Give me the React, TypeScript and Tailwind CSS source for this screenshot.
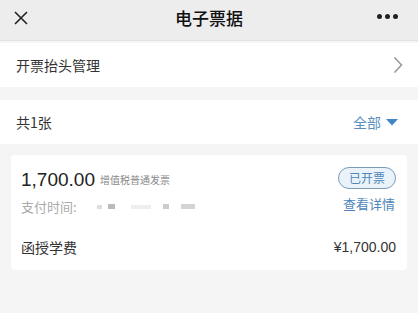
export default function App() {
  return (
    <div className="w-[418px] h-[313px] overflow-hidden bg-[#f5f5f5] font-['Noto_Sans_CJK_SC','Noto_Sans',sans-serif] text-[#333]">
      {/* Nav bar */}
      <div className="relative h-[41px] bg-[#ededed] border-b border-[#e2e2e2] flex items-center justify-center">
        <svg className="absolute left-[13px] top-[10px]" width="16" height="16" viewBox="0 0 16 16">
          <path d="M2 2L14 14M14 2L2 14" stroke="#222" strokeWidth="1.6" fill="none" />
        </svg>
        <span className="text-[17px] font-medium text-[#111] leading-none -mt-[6px]">电子票据</span>
        <div className="absolute right-[20px] top-[14px] flex gap-[3px]">
          <span className="w-[5px] h-[5px] rounded-full bg-[#222]"></span>
          <span className="w-[5px] h-[5px] rounded-full bg-[#222]"></span>
          <span className="w-[5px] h-[5px] rounded-full bg-[#222]"></span>
        </div>
      </div>

      {/* Title management */}
      <div className="mt-[2px] h-[44px] bg-white flex items-center justify-between pl-[16px] pr-[15px]">
        <span className="text-[14px] text-[#333]">开票抬头管理</span>
        <svg width="10" height="18" viewBox="0 0 10 18">
          <path d="M1.5 1.5L8.5 9L1.5 16.5" stroke="#9a9a9a" strokeWidth="1.6" fill="none" />
        </svg>
      </div>

      {/* Count row */}
      <div className="mt-[13px] h-[44px] bg-white flex items-center justify-between pl-[16px] pr-[20px]">
        <span className="text-[14px] text-[#333]">共1张</span>
        <div className="flex items-center gap-[5px]">
          <span className="text-[14px] text-[#5a8fbd]">全部</span>
          <svg width="12" height="7" viewBox="0 0 12 7">
            <path d="M0 0H12L6 6.5Z" fill="#3f86c6" />
          </svg>
        </div>
      </div>

      {/* Invoice card */}
      <div className="mt-[11px] mx-[11px] bg-white rounded-[4px] pl-[10px] pr-[11px] pt-[12px] pb-[12px]">
        <div className="flex justify-between">
          <div className="flex flex-col">
            <div className="flex items-end gap-[5px]">
              <span className="text-[19px] leading-[26px] text-[#222] font-['Liberation_Sans',sans-serif]">1,700.00</span>
              <span className="text-[10px] text-[#888] mb-[6px]">增值税普通发票</span>
            </div>
            <div className="mt-[4px] flex items-center">
              <span className="text-[13px] text-[#aaa]">支付时间:</span>
              <div className="ml-[20px] flex items-center gap-[6px]">
                <span className="w-[5px] h-[4px] bg-[#ddd]"></span>
                <span className="w-[7px] h-[5px] bg-[#bbb]"></span>
                <span className="ml-[10px] w-[20px] h-[4px] bg-[#eee]"></span>
                <span className="ml-[6px] w-[6px] h-[5px] bg-[#ccc]"></span>
                <span className="ml-[6px] w-[14px] h-[5px] bg-[#d4d4d4]"></span>
              </div>
            </div>
          </div>
          <div className="flex flex-col items-end">
            <span className="h-[22px] px-[10px] rounded-full border border-[#7a9cb8] bg-[#eaf3fa] text-[12px] leading-[20px] text-[#4f87b8]">已开票</span>
            <span className="mt-[5px] text-[13px] text-[#4f87b8] mr-[1px]">查看详情</span>
          </div>
        </div>
        <div className="mt-[20px] flex items-center justify-between">
          <span className="text-[14px] text-[#333]">函授学费</span>
          <span className="text-[14px] text-[#333] font-['Liberation_Sans',sans-serif]">¥1,700.00</span>
        </div>
      </div>
    </div>
  );
}
